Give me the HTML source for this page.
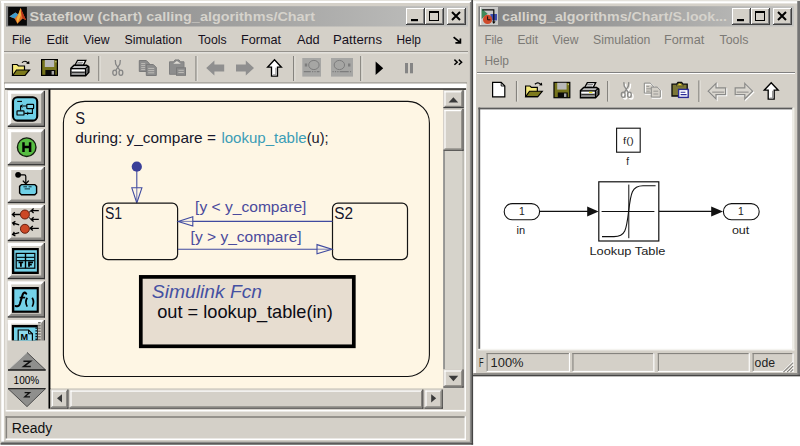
<!DOCTYPE html>
<html><head><meta charset="utf-8">
<style>
html,body{margin:0;padding:0;background:#fff;}
body{width:800px;height:446px;overflow:hidden;position:relative;font-family:"Liberation Sans",sans-serif;}
svg{position:absolute;left:0;top:0;}
text{font-family:"Liberation Sans",sans-serif;}
</style></head><body>
<svg width="800" height="446" viewBox="0 0 800 446">
<defs>
<linearGradient id="tg" x1="0" x2="1" y1="0" y2="0"><stop offset="0" stop-color="#7f7f7f"/><stop offset="1" stop-color="#c2c2c0"/></linearGradient>
</defs>
<rect x="0" y="0" width="800" height="446" fill="#ffffff"/>

<g id="leftwin">
<rect x="0" y="0" width="473" height="444.6" fill="#d4d0c8" />
<rect x="0" y="0" width="472" height="1" fill="#e4e2dc" />
<rect x="1" y="1" width="470" height="2" fill="#ffffff" />
<rect x="1.3" y="1" width="2.6" height="441" fill="#ffffff" />
<rect x="469.9" y="2" width="1.5" height="441.4" fill="#8a8a88" />
<rect x="471.4" y="0" width="1.7" height="444.6" fill="#454545" />
<rect x="1.3" y="441.7" width="470" height="1.6" fill="#8a8a88" />
<rect x="0.6" y="443.2" width="472.5" height="1.4" fill="#454545" />
<rect x="6" y="6.2" width="462" height="20.3" fill="url(#tg)" />
</g>
<g id="lefttitle">
<rect x="8.1" y="6.9" width="18.8" height="18.7" fill="#080808" />
<path d="M9.4 16.4 L15.4 12.6 L18.2 14.6 L20.6 8 L26 20 L22.6 18.4 L17.4 23.8 L14.6 18.6 Z" fill="#e0702a"/>
<path d="M9.4 16.4 L15.4 12.6 L18.2 14.6 L14.6 18.6 Z" fill="#3d9ccc"/>
<path d="M20.6 8 L26 20 L22.6 18.4 L21 12 Z" fill="#b8321a"/>
<path d="M18.2 14.6 L20.6 8 L21 15 L17.4 23.8 L16.6 19 Z" fill="#f4b43c"/>
<text x="29.6" y="21.2" font-size="13" fill="#d6d3cc" textLength="285.4" lengthAdjust="spacingAndGlyphs" font-weight="bold" >Stateflow (chart) calling_algorithms/Chart</text>
</g>
<g id="leftcap">
<rect x="406" y="8" width="19" height="17" fill="#d4d0c8" />
<rect x="406" y="8" width="18" height="1" fill="#ffffff" />
<rect x="406" y="8" width="1" height="16" fill="#ffffff" />
<rect x="424" y="8" width="1" height="17" fill="#404040" />
<rect x="406" y="24" width="19" height="1" fill="#404040" />
<rect x="423" y="9" width="1" height="15" fill="#808080" />
<rect x="407" y="23" width="17" height="1" fill="#808080" />
<rect x="411" y="19" width="7" height="2.2" fill="#000" />
<rect x="425" y="8" width="19" height="17" fill="#d4d0c8" />
<rect x="425" y="8" width="18" height="1" fill="#ffffff" />
<rect x="425" y="8" width="1" height="16" fill="#ffffff" />
<rect x="443" y="8" width="1" height="17" fill="#404040" />
<rect x="425" y="24" width="19" height="1" fill="#404040" />
<rect x="442" y="9" width="1" height="15" fill="#808080" />
<rect x="426" y="23" width="17" height="1" fill="#808080" />
<rect x="429.5" y="11.5" width="9" height="9" fill="none" stroke="#000" stroke-width="1"/>
<rect x="429" y="11" width="10" height="2" fill="#000" />
<rect x="447" y="8" width="19" height="17" fill="#d4d0c8" />
<rect x="447" y="8" width="18" height="1" fill="#ffffff" />
<rect x="447" y="8" width="1" height="16" fill="#ffffff" />
<rect x="465" y="8" width="1" height="17" fill="#404040" />
<rect x="447" y="24" width="19" height="1" fill="#404040" />
<rect x="464" y="9" width="1" height="15" fill="#808080" />
<rect x="448" y="23" width="17" height="1" fill="#808080" />
<path d="M452 12 L460 20 M460 12 L452 20" stroke="#000" stroke-width="2" fill="none"/>
</g>
<g id="leftmenu">
<text x="12" y="43.8" font-size="13.6" fill="#161020" textLength="19" lengthAdjust="spacingAndGlyphs" >File</text>
<text x="46.5" y="43.8" font-size="13.6" fill="#161020" textLength="21.9" lengthAdjust="spacingAndGlyphs" >Edit</text>
<text x="83.4" y="43.8" font-size="13.6" fill="#161020" textLength="26.1" lengthAdjust="spacingAndGlyphs" >View</text>
<text x="124.5" y="43.8" font-size="13.6" fill="#161020" textLength="57.5" lengthAdjust="spacingAndGlyphs" >Simulation</text>
<text x="198" y="43.8" font-size="13.6" fill="#161020" textLength="28.6" lengthAdjust="spacingAndGlyphs" >Tools</text>
<text x="241" y="43.8" font-size="13.6" fill="#161020" textLength="40" lengthAdjust="spacingAndGlyphs" >Format</text>
<text x="297" y="43.8" font-size="13.6" fill="#161020" textLength="22.7" lengthAdjust="spacingAndGlyphs" >Add</text>
<text x="333" y="43.8" font-size="13.6" fill="#161020" textLength="49" lengthAdjust="spacingAndGlyphs" >Patterns</text>
<text x="396.5" y="43.8" font-size="13.6" fill="#161020" textLength="24.5" lengthAdjust="spacingAndGlyphs" >Help</text>
<path d="M453.6 37.2 L459.6 42 M460.4 38.4 L460.4 42.8 L455.4 42.8" stroke="#000" stroke-width="1.7" fill="none"/>
<rect x="4" y="51.2" width="464" height="1.1" fill="#85837e" />
<rect x="4" y="52.3" width="464" height="1" fill="#f4f3ef" />
</g>
<g id="lefttoolbar">
<g transform="translate(11.5,59.5)"><path d="M1 5 L1 16 L13 16 L13 6.5 L7 6.5 L5.5 5 Z" fill="#f5e97a" stroke="#000" stroke-width="1.2"/><path d="M1.2 16 L5 10.5 L18 10.5 L13.5 16 Z" fill="#7d7a1c" stroke="#000" stroke-width="1.2"/><path d="M10.5 3.2 Q13.5 0.2 16.5 3.4" fill="none" stroke="#000" stroke-width="1.2"/><path d="M14.6 4.2 L18 4.6 L17.6 1.4 Z" fill="#000"/></g>
<g transform="translate(41,59)"><rect x="0.6" y="0.6" width="15.8" height="15.8" fill="#76741c" stroke="#000" stroke-width="1.2"/><rect x="3.8" y="1" width="9.4" height="7" fill="#b9b9b9"/><rect x="4.4" y="11" width="10" height="5.2" fill="#0a0a0a"/><rect x="10.6" y="12" width="2.4" height="3.6" fill="#a9a9a9"/><rect x="14.4" y="2" width="1" height="1.4" fill="#d8d8a0"/></g>
<g transform="translate(70,59.5)"><path d="M4.8 6 L7.6 0.8 L15.8 0.8 L13.2 6 Z" fill="#fff" stroke="#000" stroke-width="1.3"/><path d="M7.4 2.8 L13.2 2.8 M6.6 4.4 L12.4 4.4" stroke="#666" stroke-width="0.9"/><path d="M0.9 8.8 L4 5.8 L16.6 5.8 L18.8 7.4 L18.8 12.6 L15.6 16.2 L0.9 16.2 Z" fill="#bdbdbd" stroke="#000" stroke-width="1.5"/><path d="M0.9 9.2 L15.4 9.2 L18.6 6.6" fill="none" stroke="#000" stroke-width="1.3"/><path d="M15.5 9.2 L15.5 16.2" stroke="#000" stroke-width="1.3"/><path d="M16.2 10 L18.2 8 L18.2 12.4 L16.2 14.8 Z" fill="#555"/><rect x="1.7" y="10.2" width="13.1" height="1.5" fill="#fff"/><rect x="1.7" y="12.2" width="13.1" height="1.5" fill="#333"/><rect x="1.7" y="14.1" width="13.1" height="1.3" fill="#8a8a8a"/></g>
<rect x="98.2" y="56" width="1.3" height="25" fill="#85837e" />
<rect x="99.5" y="56" width="1" height="25" fill="#e8e6e0" />
<g transform="translate(112.3,59.5)" fill="none" stroke="#858585" stroke-width="1.3"><path d="M3 0.5 L3.4 4.5 L7.6 11 M8 0.5 L7.6 4.5 L3.4 11"/><ellipse cx="2.4" cy="13.2" rx="1.9" ry="2.6"/><ellipse cx="8.6" cy="13.2" rx="1.9" ry="2.6"/></g>
<g transform="translate(138.8,60)"><path d="M0.5 0.5 L7.5 0.5 L10.5 3.5 L10.5 11.5 L0.5 11.5 Z" fill="#8d8d8d" stroke="#7a7a7a" stroke-width="1"/><path d="M2.4 3.6 L6.4 3.6 M2.4 5.6 L6.4 5.6 M2.4 7.6 L6.4 7.6 M2.4 9.6 L6.4 9.6" stroke="#c4c2bc" stroke-width="0.9"/><path d="M7.5 4.5 L14.5 4.5 L17.5 7.5 L17.5 15.5 L7.5 15.5 Z" fill="#8d8d8d" stroke="#7a7a7a" stroke-width="1"/><path d="M9.4 8.4 L15.4 8.4 M9.4 10.6 L15.4 10.6 M9.4 12.8 L15.4 12.8" stroke="#c4c2bc" stroke-width="0.9"/></g>
<g transform="translate(168,59.3)"><path d="M1.5 2.5 L5.5 2.5 L7 0.6 L11 0.6 L12.5 2.5 L16 2.5 L16 15 L1.5 15 Z" fill="#8d8d8d" stroke="#808080" stroke-width="1"/><path d="M5.2 4.4 L8.9 1.6 L12.8 4.4 Z" fill="#dedbd5"/><rect x="8.5" y="8.5" width="9" height="7.5" fill="#8d8d8d" stroke="#7a7a7a" stroke-width="1"/><path d="M10.4 11 L15.8 11 M10.4 13.2 L15.8 13.2" stroke="#c4c2bc" stroke-width="0.9"/></g>
<rect x="195.4" y="56" width="1.3" height="25" fill="#85837e" />
<rect x="196.70000000000002" y="56" width="1" height="25" fill="#e8e6e0" />
<path d="M206.2 68.0 L214.39999999999998 60.5 L214.39999999999998 64.5 L224.2 64.5 L224.2 71.5 L214.39999999999998 71.5 L214.39999999999998 75.5 Z" fill="#8f8f8f" stroke="none"/>
<path d="M254 68.0 L245.8 60.5 L245.8 64.5 L236 64.5 L236 71.5 L245.8 71.5 L245.8 75.5 Z" fill="#8f8f8f" stroke="none"/>
<path d="M274.5 59.800000000000004 L281.4 67.2 L277.5 67.2 L277.5 76.10000000000001 L271.5 76.10000000000001 L271.5 67.2 L267.6 67.2 Z" fill="#fff" stroke="#000" stroke-width="1.3" stroke-linejoin="miter"/>
<path d="M275.9 67.8 L275.9 74.9 L272.9 74.9" fill="none" stroke="#9a9a9a" stroke-width="1.2"/>
<rect x="293.0" y="56" width="1.3" height="25" fill="#85837e" />
<rect x="294.3" y="56" width="1" height="25" fill="#e8e6e0" />
<rect x="302.3" y="58" width="18.7" height="18.6" fill="#a6a6a4" />
<ellipse cx="313.894" cy="65" rx="5.2" ry="4.6" fill="none" stroke="#7d7d7d" stroke-width="1"/>
<path d="M303.8 71.6 L319.5 71.6" stroke="#7d7d7d" stroke-width="1.3" stroke-dasharray="7 1.2 1.2 1.2 1.2 1.2"/>
<rect x="304.8" y="63.5" width="2.4" height="3" fill="#7d7d7d" />
<rect x="331" y="58" width="22" height="18.6" fill="#a6a6a4" />
<ellipse cx="339.36" cy="65" rx="5.2" ry="4.6" fill="none" stroke="#7d7d7d" stroke-width="1"/>
<path d="M332.5 71.6 L351.5 71.6" stroke="#7d7d7d" stroke-width="1.3" stroke-dasharray="1.2 1.2 1.2 1.2 1.2 1.2 9"/>
<rect x="348" y="63.5" width="2.4" height="3" fill="#7d7d7d" />
<rect x="360.1" y="56" width="1.3" height="25" fill="#85837e" />
<rect x="361.40000000000003" y="56" width="1" height="25" fill="#e8e6e0" />
<path d="M375.6 61.4 L383.2 68.2 L375.6 75 Z" fill="#000"/>
<rect x="405" y="63" width="3" height="10.3" fill="#858585" />
<rect x="410" y="63" width="3" height="10.3" fill="#858585" />
<path d="M454.4 59.6 L457.2 62.2 L454.4 64.8 M458.8 59.6 L461.6 62.2 L458.8 64.8" fill="none" stroke="#000" stroke-width="1.5"/>
<rect x="4" y="82.5" width="463" height="1" fill="#85837e" />
<rect x="5" y="83.6" width="461.5" height="4.8" fill="#ffffff" />
<rect x="5" y="88.4" width="461" height="1.4" fill="#000000" />
</g>
<g id="leftpalette">
<rect x="5" y="89.8" width="43.5" height="320" fill="#d4d0c8" />
<rect x="5" y="89.8" width="2.2" height="320" fill="#e6e3dd" />
<rect x="48.5" y="89.8" width="2.5" height="318.8" fill="#000" />
<rect x="7.8" y="90.8" width="37.2" height="36.2" fill="#d4d0c8" />
<rect x="7.8" y="90.8" width="36.2" height="3" fill="#ffffff" />
<rect x="7.8" y="90.8" width="3.4" height="35.2" fill="#ffffff" />
<path d="M44.0 90.8 L41.2 93.8 L41.2 123.2 L11.2 123.2 L7.8 126.0 L44.0 126.0 Z" fill="#8c8a86"/>
<rect x="43.9" y="90.8" width="1.1" height="36.2" fill="#303030" />
<rect x="7.8" y="125.7" width="37.2" height="1.3" fill="#303030" />
<rect x="7.8" y="129.2" width="37.2" height="36.2" fill="#d4d0c8" />
<rect x="7.8" y="129.2" width="36.2" height="3" fill="#ffffff" />
<rect x="7.8" y="129.2" width="3.4" height="35.2" fill="#ffffff" />
<path d="M44.0 129.2 L41.2 132.2 L41.2 161.59999999999997 L11.2 161.59999999999997 L7.8 164.39999999999998 L44.0 164.39999999999998 Z" fill="#8c8a86"/>
<rect x="43.9" y="129.2" width="1.1" height="36.2" fill="#303030" />
<rect x="7.8" y="164.09999999999997" width="37.2" height="1.3" fill="#303030" />
<rect x="7.8" y="167" width="37.2" height="36.2" fill="#d4d0c8" />
<rect x="7.8" y="167" width="36.2" height="3" fill="#ffffff" />
<rect x="7.8" y="167" width="3.4" height="35.2" fill="#ffffff" />
<path d="M44.0 167 L41.2 170 L41.2 199.39999999999998 L11.2 199.39999999999998 L7.8 202.2 L44.0 202.2 Z" fill="#8c8a86"/>
<rect x="43.9" y="167" width="1.1" height="36.2" fill="#303030" />
<rect x="7.8" y="201.89999999999998" width="37.2" height="1.3" fill="#303030" />
<rect x="7.8" y="205" width="37.2" height="36.2" fill="#d4d0c8" />
<rect x="7.8" y="205" width="36.2" height="3" fill="#ffffff" />
<rect x="7.8" y="205" width="3.4" height="35.2" fill="#ffffff" />
<path d="M44.0 205 L41.2 208 L41.2 237.39999999999998 L11.2 237.39999999999998 L7.8 240.2 L44.0 240.2 Z" fill="#8c8a86"/>
<rect x="43.9" y="205" width="1.1" height="36.2" fill="#303030" />
<rect x="7.8" y="239.89999999999998" width="37.2" height="1.3" fill="#303030" />
<rect x="7.8" y="243" width="37.2" height="36.2" fill="#d4d0c8" />
<rect x="7.8" y="243" width="36.2" height="3" fill="#ffffff" />
<rect x="7.8" y="243" width="3.4" height="35.2" fill="#ffffff" />
<path d="M44.0 243 L41.2 246 L41.2 275.4 L11.2 275.4 L7.8 278.2 L44.0 278.2 Z" fill="#8c8a86"/>
<rect x="43.9" y="243" width="1.1" height="36.2" fill="#303030" />
<rect x="7.8" y="277.9" width="37.2" height="1.3" fill="#303030" />
<rect x="7.8" y="281.4" width="37.2" height="36.2" fill="#d4d0c8" />
<rect x="7.8" y="281.4" width="36.2" height="3" fill="#ffffff" />
<rect x="7.8" y="281.4" width="3.4" height="35.2" fill="#ffffff" />
<path d="M44.0 281.4 L41.2 284.4 L41.2 313.79999999999995 L11.2 313.79999999999995 L7.8 316.59999999999997 L44.0 316.59999999999997 Z" fill="#8c8a86"/>
<rect x="43.9" y="281.4" width="1.1" height="36.2" fill="#303030" />
<rect x="7.8" y="316.29999999999995" width="37.2" height="1.3" fill="#303030" />
<rect x="13" y="97.2" width="24.2" height="23.4" rx="4.4" fill="#6fd0e6" stroke="#000" stroke-width="2.1"/>
<rect x="26.8" y="104.4" width="6.8" height="4.2" rx="0.6" fill="#7fd6ea" stroke="#000" stroke-width="1.2"/>
<rect x="17" y="110.8" width="7" height="4.2" rx="0.6" fill="#7fd6ea" stroke="#000" stroke-width="1.2"/>
<path d="M26.6 106 L20.6 106 L20.6 110.6 M32.4 108.8 L32.4 113.4 L24.4 113.4" fill="none" stroke="#000" stroke-width="1.1"/>
<path d="M22.4 104.6 L20.8 106 L22.4 107.4 M27.2 112 L28.8 113.4 L27.2 114.8" fill="none" stroke="#000" stroke-width="1"/>
<path d="M17.2 101.4 L22 101.4" stroke="#000" stroke-width="1.1"/>
<circle cx="26.7" cy="147.2" r="9.3" fill="#56bd42" stroke="#141c10" stroke-width="1.4"/>
<path d="M23.5 142.2 L23.5 152 M30.1 142.2 L30.1 152 M23.5 147 L30.1 147" stroke="#000" stroke-width="2.5" fill="none"/>
<circle cx="18.1" cy="174.8" r="2.9" fill="#000"/>
<path d="M18 174.8 L24.4 174.8 Q25.8 174.8 25.8 176.4 L25.8 183.6" fill="none" stroke="#000" stroke-width="1.2"/>
<path d="M22.8 180.6 L25.8 183.8 L28.8 180.6" fill="none" stroke="#000" stroke-width="1.3"/>
<path d="M21.4 184.6 L34.8 184.6 L36.6 186.4 L36.6 193 L34.8 194.8 L21.4 194.8 L19.6 193 L19.6 186.4 Z" fill="#6fd0e6" stroke="#000" stroke-width="1.4"/>
<path d="M23.4 186.8 L27 186.8 M28.6 186.8 L31.6 186.8 M24.6 188.9 L30 188.9" stroke="#12303c" stroke-width="1"/>
<g stroke="#000" stroke-width="1.3" fill="none"><path d="M20.4 214.5 L12.6 214.5 M14.8 212.2 L12.4 214.5 L14.8 216.8"/><path d="M38.8 210.7 L31.4 210.7 M33.6 208.5 L31.2 210.7 L33.6 212.9"/><path d="M38.8 219.4 L31.4 219.4 M33.6 217.2 L31.2 219.4 L33.6 221.6"/><path d="M31.2 210.7 L28.6 212.6 M31.2 219.4 L28.6 217.2" stroke-width="1"/><path d="M38.8 228.3 L30.6 228.3 M32.8 226 L30.2 228.3 L32.8 230.6"/><path d="M19.2 224.8 L12.8 223 M15.4 221.4 L12.6 222.9 L14.4 225.4"/><path d="M19.2 232.6 L12.8 234.4 M14.4 232 L12.6 234.5 L15.4 236"/></g>
<circle cx="24.9" cy="214.5" r="4.5" fill="#cc4826" stroke="#5a1608" stroke-width="0.9"/>
<circle cx="24.9" cy="228.8" r="4.5" fill="#cc4826" stroke="#5a1608" stroke-width="0.9"/>
<rect x="12" y="248" width="26.8" height="26" fill="#000" />
<rect x="14.3" y="250.2" width="22.6" height="21.4" fill="#74d2e8" />
<rect x="16.2" y="253.4" width="18.6" height="14.8" fill="none" stroke="#000" stroke-width="1.2"/>
<path d="M16.2 257.4 L34.8 257.4 M16.2 260.6 L34.8 260.6" stroke="#06181e" stroke-width="1.4" fill="none"/>
<path d="M25.5 253.4 L25.5 268.2" stroke="#000" stroke-width="1.4" fill="none"/>
<path d="M18.6 262.4 L23.2 262.4 M20.9 262.4 L20.9 266.8" stroke="#000" stroke-width="1.8" fill="none"/>
<path d="M29 266.8 L29 262.4 L33 262.4 M29 264.6 L31.8 264.6" stroke="#000" stroke-width="1.8" fill="none"/>
<rect x="12" y="287" width="26.8" height="25.8" fill="#000" />
<rect x="14.3" y="289.3" width="22.4" height="21.3" fill="#74d2e8" />
<path d="M26.2 293.6 Q24.2 291.4 22.8 294.2 L19.8 304 Q18.8 307 15.6 306" fill="none" stroke="#000" stroke-width="2.1" stroke-linecap="round"/>
<path d="M19.6 297.6 L25.2 297.6" stroke="#000" stroke-width="1.7"/>
<path d="M27.2 297.8 Q24.6 302.2 27.2 306.6 M32.2 297.8 Q34.8 302.2 32.2 306.6" fill="none" stroke="#000" stroke-width="1.7"/>
<rect x="7.8" y="320" width="37.2" height="20.4" fill="#d4d0c8" />
<rect x="7.8" y="320" width="36.2" height="3.6" fill="#fff" />
<rect x="7.8" y="320" width="3.4" height="20.4" fill="#fff" />
<rect x="43.9" y="320" width="1.1" height="20.4" fill="#303030" />
<path d="M44.0 320 L41.2 323 L41.2 340.4 L44.0 340.4 Z" fill="#8c8a86"/>
<rect x="11.8" y="325" width="26" height="15.4" fill="#000" />
<rect x="14" y="327.4" width="23" height="13" fill="#74d2e8" />
<path d="M18.2 340.4 L18.2 330 L28.6 330 L32.4 333.8 L32.4 340.4" fill="#8fdcee" stroke="#000" stroke-width="1.2"/>
<path d="M28.6 330 L28.6 333.8 L32.4 333.8" fill="none" stroke="#000" stroke-width="1"/>
<text x="20.6" y="340.2" font-size="8.6" fill="#000" textLength="7.6" lengthAdjust="spacingAndGlyphs" font-weight="bold" >M</text>
<path d="M39.4 322 L39.4 340.4" stroke="#77756f" stroke-width="2.6" stroke-dasharray="1.6 1.2"/>
<path d="M36.2 327.4 L36.2 340.4" stroke="#0a1a22" stroke-width="1.6" stroke-dasharray="1.4 1.4"/>
<path d="M27 352.4 L45.6 370 L8 370 Z" fill="#8f8f8d"/>
<path d="M27 352.4 L8 370" stroke="#cfcdc8" stroke-width="1"/><path d="M27 352.4 L45.6 370" stroke="#4a4a4a" stroke-width="1" fill="none"/><path d="M8 370 L45.6 370" stroke="#1a1a1a" stroke-width="1.3" fill="none"/>
<path d="M23.4 361.2 L30.6 361.2 L23.6 366.6 L30.8 366.6" stroke="#111" stroke-width="1.5" fill="none"/>
<text x="13.6" y="384" font-size="10.5" fill="#000" textLength="25.6" lengthAdjust="spacingAndGlyphs" >100%</text>
<path d="M8 388.6 L45.6 388.6 L27 406.6 Z" fill="#8f8f8d"/>
<path d="M8 388.6 L45.6 388.6" stroke="#2a2a2a" stroke-width="1.2"/><path d="M45.6 388.6 L27 406.6 L8 388.6" stroke="#4a4a4a" stroke-width="1" fill="none"/>
<path d="M24.6 392.6 L29.6 392.6 L24.8 396.8 L30 396.8" stroke="#111" stroke-width="1.3" fill="none"/>
</g>
<g id="chart">
<rect x="50.4" y="89.8" width="393" height="298.8" fill="#fef6e4" />
<rect x="50.4" y="388.6" width="393" height="1" fill="#c9c5ba" />
<rect x="63.4" y="101.4" width="366" height="275.1" rx="21.5" ry="21.5" fill="#fef6e4" stroke="#101010" stroke-width="1.1"/>
<text x="75.3" y="124.3" font-size="15.6" fill="#17172c" textLength="9.8" lengthAdjust="spacingAndGlyphs" >S</text>
<text x="75.3" y="143.4" font-size="15" fill="#17172c"><tspan textLength="140.6" lengthAdjust="spacingAndGlyphs">during: y_compare =</tspan><tspan x="221.4" fill="#3b9db6" textLength="85.3" lengthAdjust="spacingAndGlyphs">lookup_table</tspan><tspan x="306.7" textLength="21.9" lengthAdjust="spacingAndGlyphs">(u);</tspan></text>
<circle cx="136.8" cy="166.7" r="5.1" fill="#3a3f98"/>
<path d="M136.8 171 L136.8 188" stroke="#3f4aa0" stroke-width="1.1"/>
<path d="M131.8 187.8 L141.9 187.8 L136.8 203 Z" fill="#fef6e4" stroke="#3f4aa0" stroke-width="1.1"/>
<path d="M136.8 188 L136.8 202" stroke="#3f4aa0" stroke-width="0.8"/>
<rect x="102.6" y="203.2" width="75" height="56.4" rx="5.4" fill="#fef6e4" stroke="#151515" stroke-width="1.2"/>
<rect x="332.5" y="203.2" width="75" height="56.4" rx="5.4" fill="#fef6e4" stroke="#151515" stroke-width="1.2"/>
<text x="104.9" y="219.2" font-size="15.6" fill="#17172c" textLength="17.2" lengthAdjust="spacingAndGlyphs" >S1</text>
<text x="334.3" y="219.2" font-size="15.6" fill="#17172c" textLength="18.8" lengthAdjust="spacingAndGlyphs" >S2</text>
<path d="M192.6 221.4 L332.5 221.4" stroke="#3f4aa0" stroke-width="1.1"/>
<path d="M192.8 216.8 L192.8 226 L178.2 221.4 Z" fill="#fef6e4" stroke="#3f4aa0" stroke-width="1.1"/>
<path d="M192.8 221.4 L179 221.4" stroke="#3f4aa0" stroke-width="0.7"/>
<path d="M178 249.2 L317.2 249.2" stroke="#3f4aa0" stroke-width="1.1"/>
<path d="M317 244.6 L317 253.8 L332 249.2 Z" fill="#fef6e4" stroke="#3f4aa0" stroke-width="1.1"/>
<path d="M317 249.2 L331 249.2" stroke="#3f4aa0" stroke-width="0.7"/>
<text x="195.1" y="211.6" font-size="15.4" fill="#4a4a9c" textLength="111.3" lengthAdjust="spacingAndGlyphs" >[y &lt; y_compare]</text>
<text x="190.6" y="242.2" font-size="15.4" fill="#4a4a9c" textLength="111" lengthAdjust="spacingAndGlyphs" >[y &gt; y_compare]</text>
<rect x="140.8" y="276.9" width="213" height="69.4" fill="#e7ddd0" stroke="#000" stroke-width="3.7"/>
<text x="151.8" y="298.3" font-size="18.6" fill="#4450a2" textLength="110.3" lengthAdjust="spacingAndGlyphs" font-style="italic" >Simulink Fcn</text>
<text x="157.2" y="317.9" font-size="18.4" fill="#0c0c14" textLength="175.6" lengthAdjust="spacingAndGlyphs" >out = lookup_table(in)</text>
</g>
<g id="leftscroll">
<rect x="443.4" y="89.8" width="20.2" height="299.6" fill="#d6d3cb" />
<rect x="443.2" y="150.8" width="1.7" height="219" fill="#8e8e8c" />
<rect x="462.59999999999997" y="150.8" width="1" height="219" fill="#a9a7a0" />
<rect x="443.4" y="90.2" width="20.2" height="18" fill="#d4d0c8" />
<rect x="443.4" y="90.2" width="19.2" height="1" fill="#d4d0c8" />
<rect x="443.4" y="90.2" width="1" height="17" fill="#d4d0c8" />
<rect x="444.4" y="91.2" width="17.8" height="1.2" fill="#ffffff" />
<rect x="444.4" y="91.2" width="1.2" height="15.6" fill="#ffffff" />
<rect x="462.4" y="90.2" width="1.2" height="18" fill="#404040" />
<rect x="443.4" y="107.0" width="20.2" height="1.2" fill="#404040" />
<rect x="461.2" y="91.4" width="1.2" height="15.6" fill="#85837e" />
<rect x="444.59999999999997" y="105.8" width="17.8" height="1.2" fill="#85837e" />
<path d="M448.59999999999997 102.6 L458.2 102.6 L453.4 97.2 Z" fill="#3a3a3a"/>
<rect x="443.4" y="109" width="20.2" height="41.8" fill="#d4d0c8" />
<rect x="443.4" y="109" width="19.2" height="1" fill="#d4d0c8" />
<rect x="443.4" y="109" width="1" height="40.8" fill="#d4d0c8" />
<rect x="444.4" y="110" width="17.8" height="1.2" fill="#ffffff" />
<rect x="444.4" y="110" width="1.2" height="39.4" fill="#ffffff" />
<rect x="462.4" y="109" width="1.2" height="41.8" fill="#404040" />
<rect x="443.4" y="149.60000000000002" width="20.2" height="1.2" fill="#404040" />
<rect x="461.2" y="110.2" width="1.2" height="39.4" fill="#85837e" />
<rect x="444.59999999999997" y="148.4" width="17.8" height="1.2" fill="#85837e" />
<rect x="443.4" y="369.4" width="20.2" height="18.2" fill="#d4d0c8" />
<rect x="443.4" y="369.4" width="19.2" height="1" fill="#d4d0c8" />
<rect x="443.4" y="369.4" width="1" height="17.2" fill="#d4d0c8" />
<rect x="444.4" y="370.4" width="17.8" height="1.2" fill="#ffffff" />
<rect x="444.4" y="370.4" width="1.2" height="15.799999999999999" fill="#ffffff" />
<rect x="462.4" y="369.4" width="1.2" height="18.2" fill="#404040" />
<rect x="443.4" y="386.4" width="20.2" height="1.2" fill="#404040" />
<rect x="461.2" y="370.59999999999997" width="1.2" height="15.799999999999999" fill="#85837e" />
<rect x="444.59999999999997" y="385.2" width="17.8" height="1.2" fill="#85837e" />
<path d="M448.59999999999997 375.8 L458.2 375.8 L453.4 381.2 Z" fill="#3a3a3a"/>
<rect x="50.4" y="389.5" width="393" height="19.2" fill="#d6d3cb" />
<rect x="50.7" y="389.5" width="17.8" height="19.2" fill="#d4d0c8" />
<rect x="50.7" y="389.5" width="16.8" height="1" fill="#d4d0c8" />
<rect x="50.7" y="389.5" width="1" height="18.2" fill="#d4d0c8" />
<rect x="51.7" y="390.5" width="15.4" height="1.2" fill="#ffffff" />
<rect x="51.7" y="390.5" width="1.2" height="16.8" fill="#ffffff" />
<rect x="67.3" y="389.5" width="1.2" height="19.2" fill="#404040" />
<rect x="50.7" y="407.5" width="17.8" height="1.2" fill="#404040" />
<rect x="66.1" y="390.7" width="1.2" height="16.8" fill="#85837e" />
<rect x="51.900000000000006" y="406.3" width="15.4" height="1.2" fill="#85837e" />
<path d="M62 394.2 L62 402.4 L57 398.3 Z" fill="#3a3a3a"/>
<rect x="69.4" y="389.5" width="354" height="19.2" fill="#d4d0c8" />
<rect x="69.4" y="389.5" width="353" height="1" fill="#d4d0c8" />
<rect x="69.4" y="389.5" width="1" height="18.2" fill="#d4d0c8" />
<rect x="70.4" y="390.5" width="351.6" height="1.2" fill="#ffffff" />
<rect x="70.4" y="390.5" width="1.2" height="16.8" fill="#ffffff" />
<rect x="422.2" y="389.5" width="1.2" height="19.2" fill="#404040" />
<rect x="69.4" y="407.5" width="354" height="1.2" fill="#404040" />
<rect x="421.0" y="390.7" width="1.2" height="16.8" fill="#85837e" />
<rect x="70.60000000000001" y="406.3" width="351.6" height="1.2" fill="#85837e" />
<rect x="424.4" y="389.5" width="18.4" height="19.2" fill="#d4d0c8" />
<rect x="424.4" y="389.5" width="17.4" height="1" fill="#d4d0c8" />
<rect x="424.4" y="389.5" width="1" height="18.2" fill="#d4d0c8" />
<rect x="425.4" y="390.5" width="15.999999999999998" height="1.2" fill="#ffffff" />
<rect x="425.4" y="390.5" width="1.2" height="16.8" fill="#ffffff" />
<rect x="441.59999999999997" y="389.5" width="1.2" height="19.2" fill="#404040" />
<rect x="424.4" y="407.5" width="18.4" height="1.2" fill="#404040" />
<rect x="440.4" y="390.7" width="1.2" height="16.8" fill="#85837e" />
<rect x="425.59999999999997" y="406.3" width="15.999999999999998" height="1.2" fill="#85837e" />
<path d="M431.2 394.2 L431.2 402.4 L436.2 398.3 Z" fill="#3a3a3a"/>
<rect x="443.4" y="388.4" width="20.2" height="20.4" fill="#d4d0c8" />
<rect x="464.5" y="89.8" width="1.4" height="321.6" fill="#ffffff" />
<rect x="5.6" y="409.9" width="460.2" height="1.6" fill="#ffffff" />
</g>
<g id="leftstatus">
<rect x="5.6" y="416.2" width="459.6" height="1.6" fill="#85837e" />
<rect x="5.6" y="416.2" width="1.5" height="23.6" fill="#85837e" />
<rect x="5.6" y="438.5" width="460.2" height="1.5" fill="#ffffff" />
<rect x="464.6" y="416.2" width="1.3" height="23.8" fill="#ffffff" />
<text x="11.8" y="432.5" font-size="14" fill="#111" textLength="40.4" lengthAdjust="spacingAndGlyphs" >Ready</text>
</g>
<g id="rightwin">
<rect x="473" y="0" width="327" height="376.3" fill="#d4d0c8" />
<rect x="473" y="0" width="327" height="1.2" fill="#e4e2dc" />
<rect x="473.4" y="1.2" width="324" height="2.2" fill="#ffffff" />
<rect x="473.4" y="1.2" width="2.6" height="371.8" fill="#ffffff" />
<rect x="797.3" y="1" width="2.7" height="374" fill="#747474" />
<rect x="473.4" y="373" width="325" height="1.8" fill="#908e8a" />
<rect x="473" y="374.8" width="327" height="1.5" fill="#454545" />
<rect x="478.4" y="6.2" width="315.4" height="20.3" fill="url(#tg)" />
</g>
<g id="righttitle">
<rect x="480" y="7" width="18" height="18" fill="#c9c9c7" />
<rect x="480" y="7" width="1.2" height="18" fill="#f2f2f2" />
<path d="M481.6 8.6 L481.6 19 L487.6 13.8 Z" fill="#3f8a5a"/>
<rect x="490.4" y="14" width="6.6" height="6.4" fill="#3b4bb0" />
<circle cx="487.6" cy="19.4" r="4.6" fill="#cf4a2a"/>
<path d="M487.6 16.4 L487.6 19.8 L490.4 19.8" fill="none" stroke="#111" stroke-width="1"/>
<path d="M482.4 9.8 L493.8 9.8 L493.8 22" fill="none" stroke="#0a0a0a" stroke-width="1.2"/>
<path d="M492 21.4 L493.8 24 L495.6 21.4 Z" fill="#0a0a0a"/>
<text x="502" y="21.2" font-size="13" fill="#d6d3cc" textLength="225" lengthAdjust="spacingAndGlyphs" font-weight="bold" >calling_algorithms/Chart/S.look...</text>
</g>
<g id="rightcap">
<rect x="732" y="8" width="19" height="17" fill="#d4d0c8" />
<rect x="732" y="8" width="18" height="1" fill="#ffffff" />
<rect x="732" y="8" width="1" height="16" fill="#ffffff" />
<rect x="750" y="8" width="1" height="17" fill="#404040" />
<rect x="732" y="24" width="19" height="1" fill="#404040" />
<rect x="749" y="9" width="1" height="15" fill="#808080" />
<rect x="733" y="23" width="17" height="1" fill="#808080" />
<rect x="737" y="19" width="7" height="2.2" fill="#000" />
<rect x="751" y="8" width="19" height="17" fill="#d4d0c8" />
<rect x="751" y="8" width="18" height="1" fill="#ffffff" />
<rect x="751" y="8" width="1" height="16" fill="#ffffff" />
<rect x="769" y="8" width="1" height="17" fill="#404040" />
<rect x="751" y="24" width="19" height="1" fill="#404040" />
<rect x="768" y="9" width="1" height="15" fill="#808080" />
<rect x="752" y="23" width="17" height="1" fill="#808080" />
<rect x="755.5" y="11.5" width="9" height="9" fill="none" stroke="#000" stroke-width="1"/>
<rect x="755" y="11" width="10" height="2" fill="#000" />
<rect x="773" y="8" width="19" height="17" fill="#d4d0c8" />
<rect x="773" y="8" width="18" height="1" fill="#ffffff" />
<rect x="773" y="8" width="1" height="16" fill="#ffffff" />
<rect x="791" y="8" width="1" height="17" fill="#404040" />
<rect x="773" y="24" width="19" height="1" fill="#404040" />
<rect x="790" y="9" width="1" height="15" fill="#808080" />
<rect x="774" y="23" width="17" height="1" fill="#808080" />
<path d="M778 12 L786 20 M786 12 L778 20" stroke="#000" stroke-width="2" fill="none"/>
</g>
<g id="rightmenu">
<text x="484.4" y="43.8" font-size="13.6" fill="#7c7a76" textLength="18.6" lengthAdjust="spacingAndGlyphs" >File</text>
<text x="517.4" y="43.8" font-size="13.6" fill="#7c7a76" textLength="20.6" lengthAdjust="spacingAndGlyphs" >Edit</text>
<text x="552.5" y="43.8" font-size="13.6" fill="#7c7a76" textLength="26.0" lengthAdjust="spacingAndGlyphs" >View</text>
<text x="593" y="43.8" font-size="13.6" fill="#7c7a76" textLength="57.3" lengthAdjust="spacingAndGlyphs" >Simulation</text>
<text x="664" y="43.8" font-size="13.6" fill="#7c7a76" textLength="40.3" lengthAdjust="spacingAndGlyphs" >Format</text>
<text x="719.5" y="43.8" font-size="13.6" fill="#7c7a76" textLength="28.9" lengthAdjust="spacingAndGlyphs" >Tools</text>
<text x="484.4" y="65" font-size="13.6" fill="#7c7a76" textLength="24.6" lengthAdjust="spacingAndGlyphs" >Help</text>
<rect x="477" y="72" width="318" height="1" fill="#808080" />
<rect x="477" y="73" width="318" height="1" fill="#ffffff" />
</g>
<g id="righttoolbar">
<path d="M492.6 82.4 L501.2 82.4 L504.8 86 L504.8 96.8 L492.6 96.8 Z" fill="#fff" stroke="#000" stroke-width="1.2"/>
<path d="M501.2 82.4 L501.2 86 L504.8 86" fill="none" stroke="#000" stroke-width="0.9"/>
<rect x="515.9" y="81" width="1.3" height="20.599999999999994" fill="#85837e" />
<rect x="517.1999999999999" y="81" width="1" height="20.599999999999994" fill="#e8e6e0" />
<g transform="translate(524.6,81.2) scale(0.98,0.96)">
<g transform="translate(0,0)"><path d="M1 5 L1 16 L13 16 L13 6.5 L7 6.5 L5.5 5 Z" fill="#f5e97a" stroke="#000" stroke-width="1.2"/><path d="M1.2 16 L5 10.5 L18 10.5 L13.5 16 Z" fill="#7d7a1c" stroke="#000" stroke-width="1.2"/><path d="M10.5 3.2 Q13.5 0.2 16.5 3.4" fill="none" stroke="#000" stroke-width="1.2"/><path d="M14.6 4.2 L18 4.6 L17.6 1.4 Z" fill="#000"/></g>
</g>
<g transform="translate(553.4,81.8) scale(1.0,0.97)">
<g transform="translate(0,0)"><rect x="0.6" y="0.6" width="15.8" height="15.8" fill="#76741c" stroke="#000" stroke-width="1.2"/><rect x="3.8" y="1" width="9.4" height="7" fill="#b9b9b9"/><rect x="4.4" y="11" width="10" height="5.2" fill="#0a0a0a"/><rect x="10.6" y="12" width="2.4" height="3.6" fill="#a9a9a9"/><rect x="14.4" y="2" width="1" height="1.4" fill="#d8d8a0"/></g>
</g>
<g transform="translate(579.6,81.8) scale(1.02,0.99)">
<g transform="translate(0,0)"><path d="M4.8 6 L7.6 0.8 L15.8 0.8 L13.2 6 Z" fill="#fff" stroke="#000" stroke-width="1.3"/><path d="M7.4 2.8 L13.2 2.8 M6.6 4.4 L12.4 4.4" stroke="#666" stroke-width="0.9"/><path d="M0.9 8.8 L4 5.8 L16.6 5.8 L18.8 7.4 L18.8 12.6 L15.6 16.2 L0.9 16.2 Z" fill="#bdbdbd" stroke="#000" stroke-width="1.5"/><path d="M0.9 9.2 L15.4 9.2 L18.6 6.6" fill="none" stroke="#000" stroke-width="1.3"/><path d="M15.5 9.2 L15.5 16.2" stroke="#000" stroke-width="1.3"/><path d="M16.2 10 L18.2 8 L18.2 12.4 L16.2 14.8 Z" fill="#555"/><rect x="1.7" y="10.2" width="13.1" height="1.5" fill="#fff"/><rect x="1.7" y="12.2" width="13.1" height="1.5" fill="#333"/><rect x="1.7" y="14.1" width="13.1" height="1.3" fill="#8a8a8a"/></g>
</g>
<rect x="589" y="91.8" width="3.4" height="1.2" fill="#e8e020"/>
<rect x="607.0" y="81" width="1.3" height="20.599999999999994" fill="#85837e" />
<rect x="608.3" y="81" width="1" height="20.599999999999994" fill="#e8e6e0" />
<g transform="translate(1,1)">
<g transform="translate(621.6,82.2)" fill="none" stroke="#ffffff" stroke-width="1.3"><path d="M3 0.5 L3.4 4.5 L7.6 11 M8 0.5 L7.6 4.5 L3.4 11"/><ellipse cx="2.4" cy="13.2" rx="1.9" ry="2.6"/><ellipse cx="8.6" cy="13.2" rx="1.9" ry="2.6"/></g>
</g>
<g transform="translate(620.8,81.6)" fill="none" stroke="#8a8a88" stroke-width="1.3"><path d="M3 0.5 L3.4 4.5 L7.6 11 M8 0.5 L7.6 4.5 L3.4 11"/><ellipse cx="2.4" cy="13.2" rx="1.9" ry="2.6"/><ellipse cx="8.6" cy="13.2" rx="1.9" ry="2.6"/></g>
<g transform="translate(644.8,83.6)" fill="none" stroke="#ffffff" stroke-width="1.2"><path d="M0.5 0.5 L6.5 0.5 L9.5 3.5 L9.5 10.5 L0.5 10.5 Z"/><path d="M7.5 4.5 L13.5 4.5 L16.5 7.5 L16.5 14.5 L7.5 14.5 Z" fill="#d4d0c8"/></g>
<g transform="translate(643.8,82.6)" fill="none" stroke="#8a8a88" stroke-width="1"><path d="M0.5 0.5 L6.5 0.5 L9.5 3.5 L9.5 10.5 L0.5 10.5 Z"/><path d="M2.6 3.8 L5.4 3.8 M2.6 6.2 L7.2 6.2 M2.6 8.6 L6 8.6" stroke-width="0.8"/><path d="M7.5 4.5 L13.5 4.5 L16.5 7.5 L16.5 14.5 L7.5 14.5 Z" fill="#d4d0c8"/><path d="M9.6 8.6 L14.4 8.6 M9.6 11.4 L14.4 11.4" stroke-width="0.8"/></g>
<g transform="translate(671,81.6)"><path d="M1 2.6 L5.6 2.6 L7 0.8 L10.6 0.8 L12 2.6 L16.2 2.6 L16.2 14.4 L1 14.4 Z" fill="#7b7636" stroke="#0a0a0a" stroke-width="1.3"/><path d="M5 4.2 L8.8 1.4 L12.6 4.2 Z" fill="#e6d23a" stroke="#222" stroke-width="0.5"/><rect x="7.6" y="7.8" width="9.6" height="8" fill="#fff" stroke="#2a2a96" stroke-width="1.4"/><path d="M9.6 10.6 L14.4 10.6 M9.6 13 L15.6 13" stroke="#2a2a96" stroke-width="1.1"/></g>
<rect x="698.3" y="80.4" width="1.3" height="21.599999999999994" fill="#85837e" />
<rect x="699.5999999999999" y="80.4" width="1" height="21.599999999999994" fill="#e8e6e0" />
<path d="M708.2 91.2 L716.0 83.4 L716.0 87.80000000000001 L725.6 87.80000000000001 L725.6 94.6 L716.0 94.6 L716.0 99.0 Z" transform="translate(1,1)" fill="none" stroke="#fff" stroke-width="1.3"/>
<path d="M708.2 91.2 L716.0 83.4 L716.0 87.80000000000001 L725.6 87.80000000000001 L725.6 94.6 L716.0 94.6 L716.0 99.0 Z" fill="#d9d6cf" stroke="#8a8a88" stroke-width="1.2"/>
<path d="M712.2 92.2 L724.2 92.2" stroke="#a8a6a2" stroke-width="1.6"/>
<path d="M752.6 91.2 L744.8000000000001 83.4 L744.8000000000001 87.80000000000001 L735.2 87.80000000000001 L735.2 94.6 L744.8000000000001 94.6 L744.8000000000001 99.0 Z" transform="translate(1,1)" fill="none" stroke="#fff" stroke-width="1.3"/>
<path d="M752.6 91.2 L744.8000000000001 83.4 L744.8000000000001 87.80000000000001 L735.2 87.80000000000001 L735.2 94.6 L744.8000000000001 94.6 L744.8000000000001 99.0 Z" fill="#d9d6cf" stroke="#8a8a88" stroke-width="1.2"/>
<path d="M736.6 92.2 L748.6 92.2" stroke="#a8a6a2" stroke-width="1.6"/>
<path d="M771.2 82.8 L778.2 90.2 L774.2 90.2 L774.2 99.20000000000002 L768.2 99.20000000000002 L768.2 90.2 L764.2 90.2 Z" fill="#fff" stroke="#000" stroke-width="1.3" stroke-linejoin="miter"/>
<path d="M772.6 90.8 L772.6 98.00000000000001 L769.6 98.00000000000001" fill="none" stroke="#9a9a9a" stroke-width="1.2"/>
</g>
<g id="model">
<rect x="478.4" y="107.8" width="314" height="242" fill="#ffffff" />
<rect x="478.4" y="107.6" width="314.6" height="1.8" fill="#5a5a5a" />
<rect x="478.4" y="107.6" width="1.8" height="241.4" fill="#5a5a5a" />
<rect x="478.4" y="348.8" width="316" height="1.6" fill="#f4f3ef" />
<rect x="792.2" y="107.6" width="2.2" height="242.8" fill="#f0efe9" />
<rect x="616.6" y="128.2" width="23.6" height="24" fill="#fff" stroke="#111" stroke-width="1.1"/>
<text x="628.4" y="144" font-size="9.6" fill="#222" textLength="10.6" lengthAdjust="spacingAndGlyphs" text-anchor="middle" >f()</text>
<text x="627.6" y="165.4" font-size="10" fill="#222" text-anchor="middle" >f</text>
<rect x="504.2" y="203.6" width="35.4" height="16.2" rx="8.1" fill="#fff" stroke="#111" stroke-width="1.1"/>
<text x="521.8" y="214.6" font-size="10.4" fill="#222" text-anchor="middle" >1</text>
<text x="520.8" y="233.6" font-size="10.4" fill="#222" textLength="8.6" lengthAdjust="spacingAndGlyphs" text-anchor="middle" >in</text>
<path d="M540 211.4 L589 211.4" stroke="#111" stroke-width="1.1"/>
<path d="M587.2 206.4 L598.6 211.4 L587.2 216.4 Z" fill="#111"/>
<rect x="598.8" y="181.8" width="60" height="59.2" fill="#fff" stroke="#111" stroke-width="1.2"/>
<path d="M601.6 211.5 L654.4 211.5 M628.8 184.6 L628.8 238.2" stroke="#111" stroke-width="1"/>
<path d="M602 236.6 L614 236.6 C625.4 236.6 626.4 230 628.6 211.5 C630.8 193 631.8 185.8 643 185.8 L655.6 185.8" fill="none" stroke="#111" stroke-width="1.1"/>
<text x="627.4" y="255" font-size="10.6" fill="#222" textLength="76" lengthAdjust="spacingAndGlyphs" text-anchor="middle" >Lookup Table</text>
<path d="M659 211.4 L712 211.4" stroke="#111" stroke-width="1.1"/>
<path d="M711.2 206.4 L723 211.4 L711.2 216.4 Z" fill="#111"/>
<rect x="723.4" y="203.6" width="35.8" height="16.2" rx="8.1" fill="#fff" stroke="#111" stroke-width="1.1"/>
<text x="741" y="214.6" font-size="10.4" fill="#222" text-anchor="middle" >1</text>
<text x="740.6" y="233.6" font-size="10.4" fill="#222" textLength="17.4" lengthAdjust="spacingAndGlyphs" text-anchor="middle" >out</text>
</g>
<g id="rightstatus">
<text x="479" y="367" font-size="12.6" fill="#222" textLength="4.6" lengthAdjust="spacingAndGlyphs" >F</text>
<rect x="486.6" y="353" width="83.39999999999998" height="1.1" fill="#85837e" />
<rect x="486.6" y="353" width="1.1" height="19" fill="#85837e" />
<rect x="486.6" y="370.9" width="83.39999999999998" height="1.1" fill="#ffffff" />
<rect x="568.9" y="353" width="1.1" height="19" fill="#ffffff" />
<rect x="572.4" y="353" width="82.0" height="1.1" fill="#85837e" />
<rect x="572.4" y="353" width="1.1" height="19" fill="#85837e" />
<rect x="572.4" y="370.9" width="82.0" height="1.1" fill="#ffffff" />
<rect x="653.3" y="353" width="1.1" height="19" fill="#ffffff" />
<rect x="657.8" y="353" width="92.0" height="1.1" fill="#85837e" />
<rect x="657.8" y="353" width="1.1" height="19" fill="#85837e" />
<rect x="657.8" y="370.9" width="92.0" height="1.1" fill="#ffffff" />
<rect x="748.6999999999999" y="353" width="1.1" height="19" fill="#ffffff" />
<rect x="752.6" y="353" width="41.0" height="1.1" fill="#85837e" />
<rect x="752.6" y="353" width="1.1" height="19" fill="#85837e" />
<rect x="752.6" y="370.9" width="41.0" height="1.1" fill="#ffffff" />
<rect x="792.5" y="353" width="1.1" height="19" fill="#ffffff" />
<text x="490.6" y="367" font-size="12.8" fill="#222" textLength="33" lengthAdjust="spacingAndGlyphs" >100%</text>
<text x="754.6" y="367" font-size="12.8" fill="#222" textLength="20.4" lengthAdjust="spacingAndGlyphs" >ode</text>
<path d="M793 362.6 L783.4 372 M793 366 L787 372 M793 369.4 L790.4 372" stroke="#85837e" stroke-width="1.3"/>
<path d="M793 361.4 L782.2 372 M793 364.8 L785.8 372 M793 368.2 L789.2 372" stroke="#ffffff" stroke-width="0.9"/>
</g>
</svg>
</body></html>
